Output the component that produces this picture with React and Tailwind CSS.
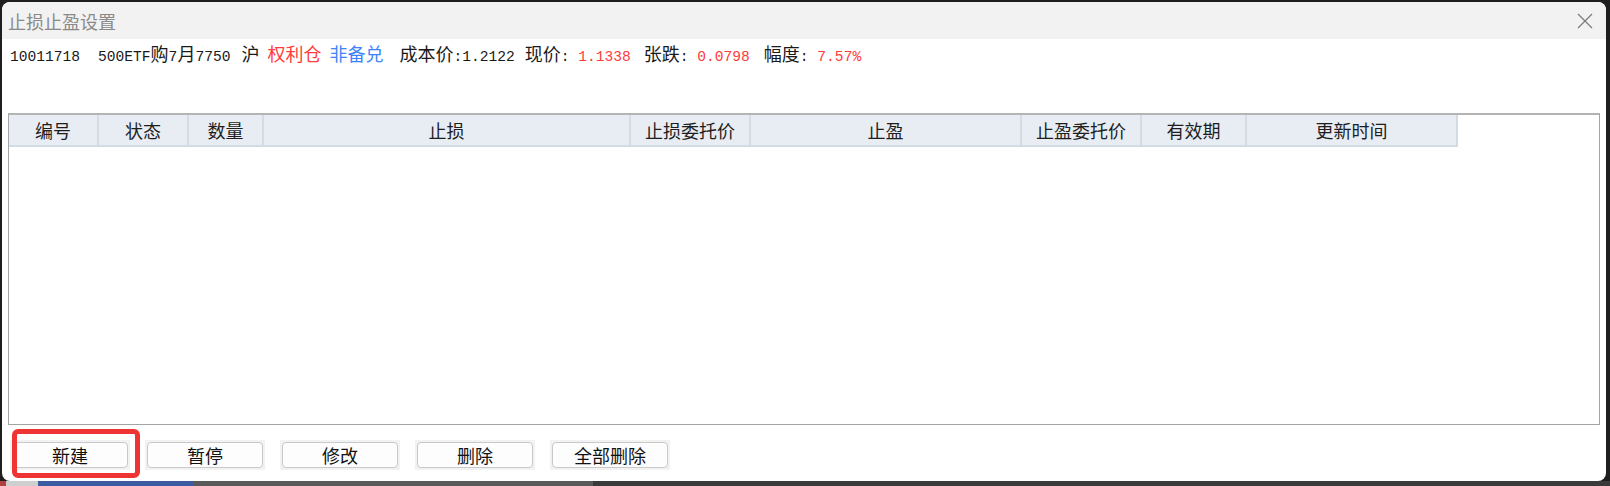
import React from "react";

function C({ children, className = "" }) {
  return (
    <span className={"font-['Noto_Sans_CJK_SC',sans-serif] text-[18px] leading-none " + className}>
      {children}
    </span>
  );
}

function M({ children, className = "" }) {
  return (
    <span className={"font-['Liberation_Mono',monospace] text-[14.6px] leading-none " + className}>
      {children}
    </span>
  );
}

const cols = [
  { label: "编号", w: "w-[90px]" },
  { label: "状态", w: "w-[90px]" },
  { label: "数量", w: "w-[75px]" },
  { label: "止损", w: "w-[367px]" },
  { label: "止损委托价", w: "w-[120px]" },
  { label: "止盈", w: "w-[271px]" },
  { label: "止盈委托价", w: "w-[120px]" },
  { label: "有效期", w: "w-[105px]" },
  { label: "更新时间", w: "w-[211px]" },
];

const buttons = ["新建", "暂停", "修改", "删除", "全部删除"];

export default function App() {
  return (
    <div className="relative w-[1610px] h-[486px] bg-[#1e1e1e] overflow-hidden flex flex-col">
      <div className="h-[2px] shrink-0" />
      <div className="ml-[2px] w-[1604px] h-[479px] shrink-0 bg-white rounded-[8px] overflow-hidden flex flex-col">
        {/* title bar */}
        <div className="h-[37px] shrink-0 bg-[#f2f2f2] flex items-center justify-between pl-[6px] pr-[13px]">
          <span className="font-['Noto_Sans_CJK_SC',sans-serif] text-[18px] leading-none text-[#8a8a8a]">
            止损止盈设置
          </span>
          <svg width="16" height="16" viewBox="0 0 16 16" className="mt-[1px]">
            <path d="M1 1 L15 15 M15 1 L1 15" stroke="#7a7a7a" strokeWidth="1.2" fill="none" />
          </svg>
        </div>

        {/* info line */}
        <div className="mt-[5px] h-[21px] shrink-0 flex items-baseline pl-[8px] text-[#1a1a1a] whitespace-pre">
          <M>10011718</M>
          <span className="ml-[18px] flex items-baseline">
            <M>500ETF</M>
            <C>购</C>
            <M>7</M>
            <C>月</C>
            <M>7750</M>
          </span>
          <C className="ml-[11px]">沪</C>
          <C className="ml-[8px] text-[#ff3b3b]">权利仓</C>
          <C className="ml-[8px] text-[#3d85f7]">非备兑</C>
          <C className="ml-[16px]">成本价</C>
          <M>:1.2122</M>
          <C className="ml-[10px]">现价</C>
          <M>: </M>
          <M className="text-[#ff3b3b]">1.1338</M>
          <C className="ml-[13px]">张跌</C>
          <M>: </M>
          <M className="text-[#ff3b3b]">0.0798</M>
          <C className="ml-[14px]">幅度</C>
          <M>: </M>
          <M className="text-[#ff3b3b]">7.57%</M>
        </div>

        {/* table */}
        <div className="mt-[48px] ml-[6px] w-[1592px] h-[312px] shrink-0 border border-[#a5a5a5] border-t-[2px] border-t-[#b4b4b4] bg-white">
          <div className="flex h-[32px]">
            {cols.map((c) => (
              <div
                key={c.label}
                className={
                  c.w +
                  " h-full shrink-0 flex items-center justify-center bg-[#e8edf4] border-r-[2px] border-r-[#d3dbe5] border-b-[2px] border-b-[#d3dbe5] font-['Noto_Sans_CJK_SC',sans-serif] text-[18px] leading-none text-[#1e1e1e]"
                }
              >
                {c.label}
              </div>
            ))}
          </div>
        </div>

        {/* buttons */}
        <div className="mt-[15px] pl-[8px] flex gap-[15px] shrink-0">
          {buttons.map((b) => (
            <div key={b} className="w-[120px] h-[30px] p-[2px] bg-[#f2f2f2]">
              <div className="w-full h-full bg-[#fdfdfd] border border-[#c9c9c9] rounded-[4px] flex items-center justify-center font-['Noto_Sans_CJK_SC',sans-serif] text-[18px] leading-none text-[#111]">
                {b}
              </div>
            </div>
          ))}
        </div>
      </div>

      {/* background strip below window */}
      <div className="flex h-[5px] shrink-0">
        <div className="w-[6px] bg-[#b04040]" />
        <div className="w-[32px] bg-[#cfcfcf]" />
        <div className="w-[155px] bg-[#3b5ca0]" />
        <div className="w-[400px] bg-[#5a5a5a]" />
        <div className="flex-1 bg-[#3a3a3a]" />
      </div>

      {/* red highlight annotation */}
      <div className="absolute left-[12px] top-[429px] w-[128px] h-[49px] border-[5px] border-[#ef3434] rounded-[6px]" />
    </div>
  );
}
